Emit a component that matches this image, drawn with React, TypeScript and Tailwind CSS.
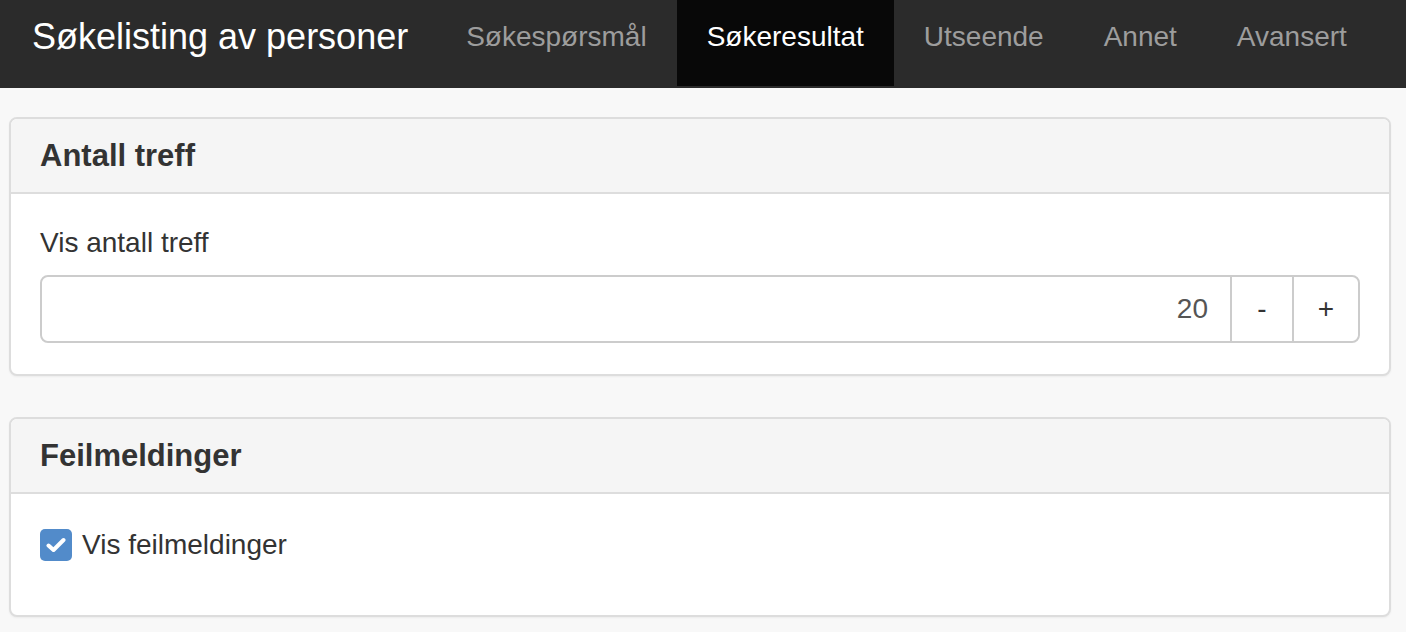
import { useState } from "react";

const font = { fontFamily: '"Liberation Sans", Arial, Helvetica, sans-serif' };

const tabs = ["Søkespørsmål", "Søkeresultat", "Utseende", "Annet", "Avansert"];

function Panel({ title, children }: { title: string; children: React.ReactNode }) {
  return (
    <section className="rounded-[8px] border-2 border-[#dddddd] bg-white shadow-[0_1px_2px_rgba(0,0,0,0.05)]">
      <div className="rounded-t-[6px] border-b-2 border-[#dddddd] bg-[#f5f5f5] px-[29px] pt-[19px] pb-[19px]">
        <h3 className="text-[31px] leading-[35px] font-bold text-[#333333]">{title}</h3>
      </div>
      <div className="px-[29px] pt-[29px] pb-[31px]">{children}</div>
    </section>
  );
}

export default function App() {
  const [count, setCount] = useState(20);
  const [showErrors, setShowErrors] = useState(true);

  return (
    <div className="min-h-screen bg-[#f8f8f8] text-[#333333]" style={font}>
      <nav className="flex h-[88px] border-b-2 border-[#2b2b2b] bg-[#2b2b2b]">
        <a className="pl-[32px] pr-[28px] pt-[17px] text-[36px] leading-[40px] text-white">
          Søkelisting av personer
        </a>
        <ul className="flex">
          {tabs.map((t) => (
            <li key={t}>
              <a
                className={
                  t === "Søkeresultat"
                    ? "block h-[86px] bg-[#080808] px-[30px] pt-[17px] text-[28px] leading-[40px] text-white"
                    : "block h-[86px] px-[30px] pt-[17px] text-[28px] leading-[40px] text-[#9d9d9d]"
                }
              >
                {t}
              </a>
            </li>
          ))}
        </ul>
      </nav>

      <main className="ml-[9px] mr-[15px] pt-[29px]">
        <Panel title="Antall treff">
          <label className="block text-[28px] leading-[40px]">Vis antall treff</label>
          <div className="mt-[12px] flex h-[68px] rounded-[8px] border-2 border-[#cccccc]">
            <input
              value={count}
              onChange={(e) => setCount(Number(e.target.value) || 0)}
              className="min-w-0 flex-1 rounded-l-[8px] bg-white pr-[22px] text-right text-[28px] text-[#555555] outline-none"
            />
            <button
              onClick={() => setCount((c) => c - 1)}
              className="w-[62px] border-l-2 border-[#cccccc] bg-white text-[28px] text-[#333333]"
            >
              -
            </button>
            <button
              onClick={() => setCount((c) => c + 1)}
              className="w-[66px] rounded-r-[8px] border-l-2 border-[#cccccc] bg-white text-[28px] text-[#333333]"
            >
              +
            </button>
          </div>
        </Panel>

        <div className="mt-[41px]">
          <Panel title="Feilmeldinger">
            <label className="mt-[2px] mb-[19px] flex h-[40px] items-center gap-[10px] text-[28px] leading-[40px]">
              <button
                onClick={() => setShowErrors((v) => !v)}
                className={
                  showErrors
                    ? "flex h-[32px] w-[32px] items-center justify-center rounded-[5px] bg-[#528bca]"
                    : "flex h-[32px] w-[32px] items-center justify-center rounded-[5px] border-2 border-[#aaaaaa] bg-white"
                }
              >
                {showErrors ? (
                  <svg width="20" height="16" viewBox="0 0 20 16">
                    <path d="M2.5 8.5 L7.5 13 L17.5 3" fill="none" stroke="white" strokeWidth="4" strokeLinecap="round" strokeLinejoin="round" />
                  </svg>
                ) : null}
              </button>
              <span>Vis feilmeldinger</span>
            </label>
          </Panel>
        </div>
      </main>
    </div>
  );
}
